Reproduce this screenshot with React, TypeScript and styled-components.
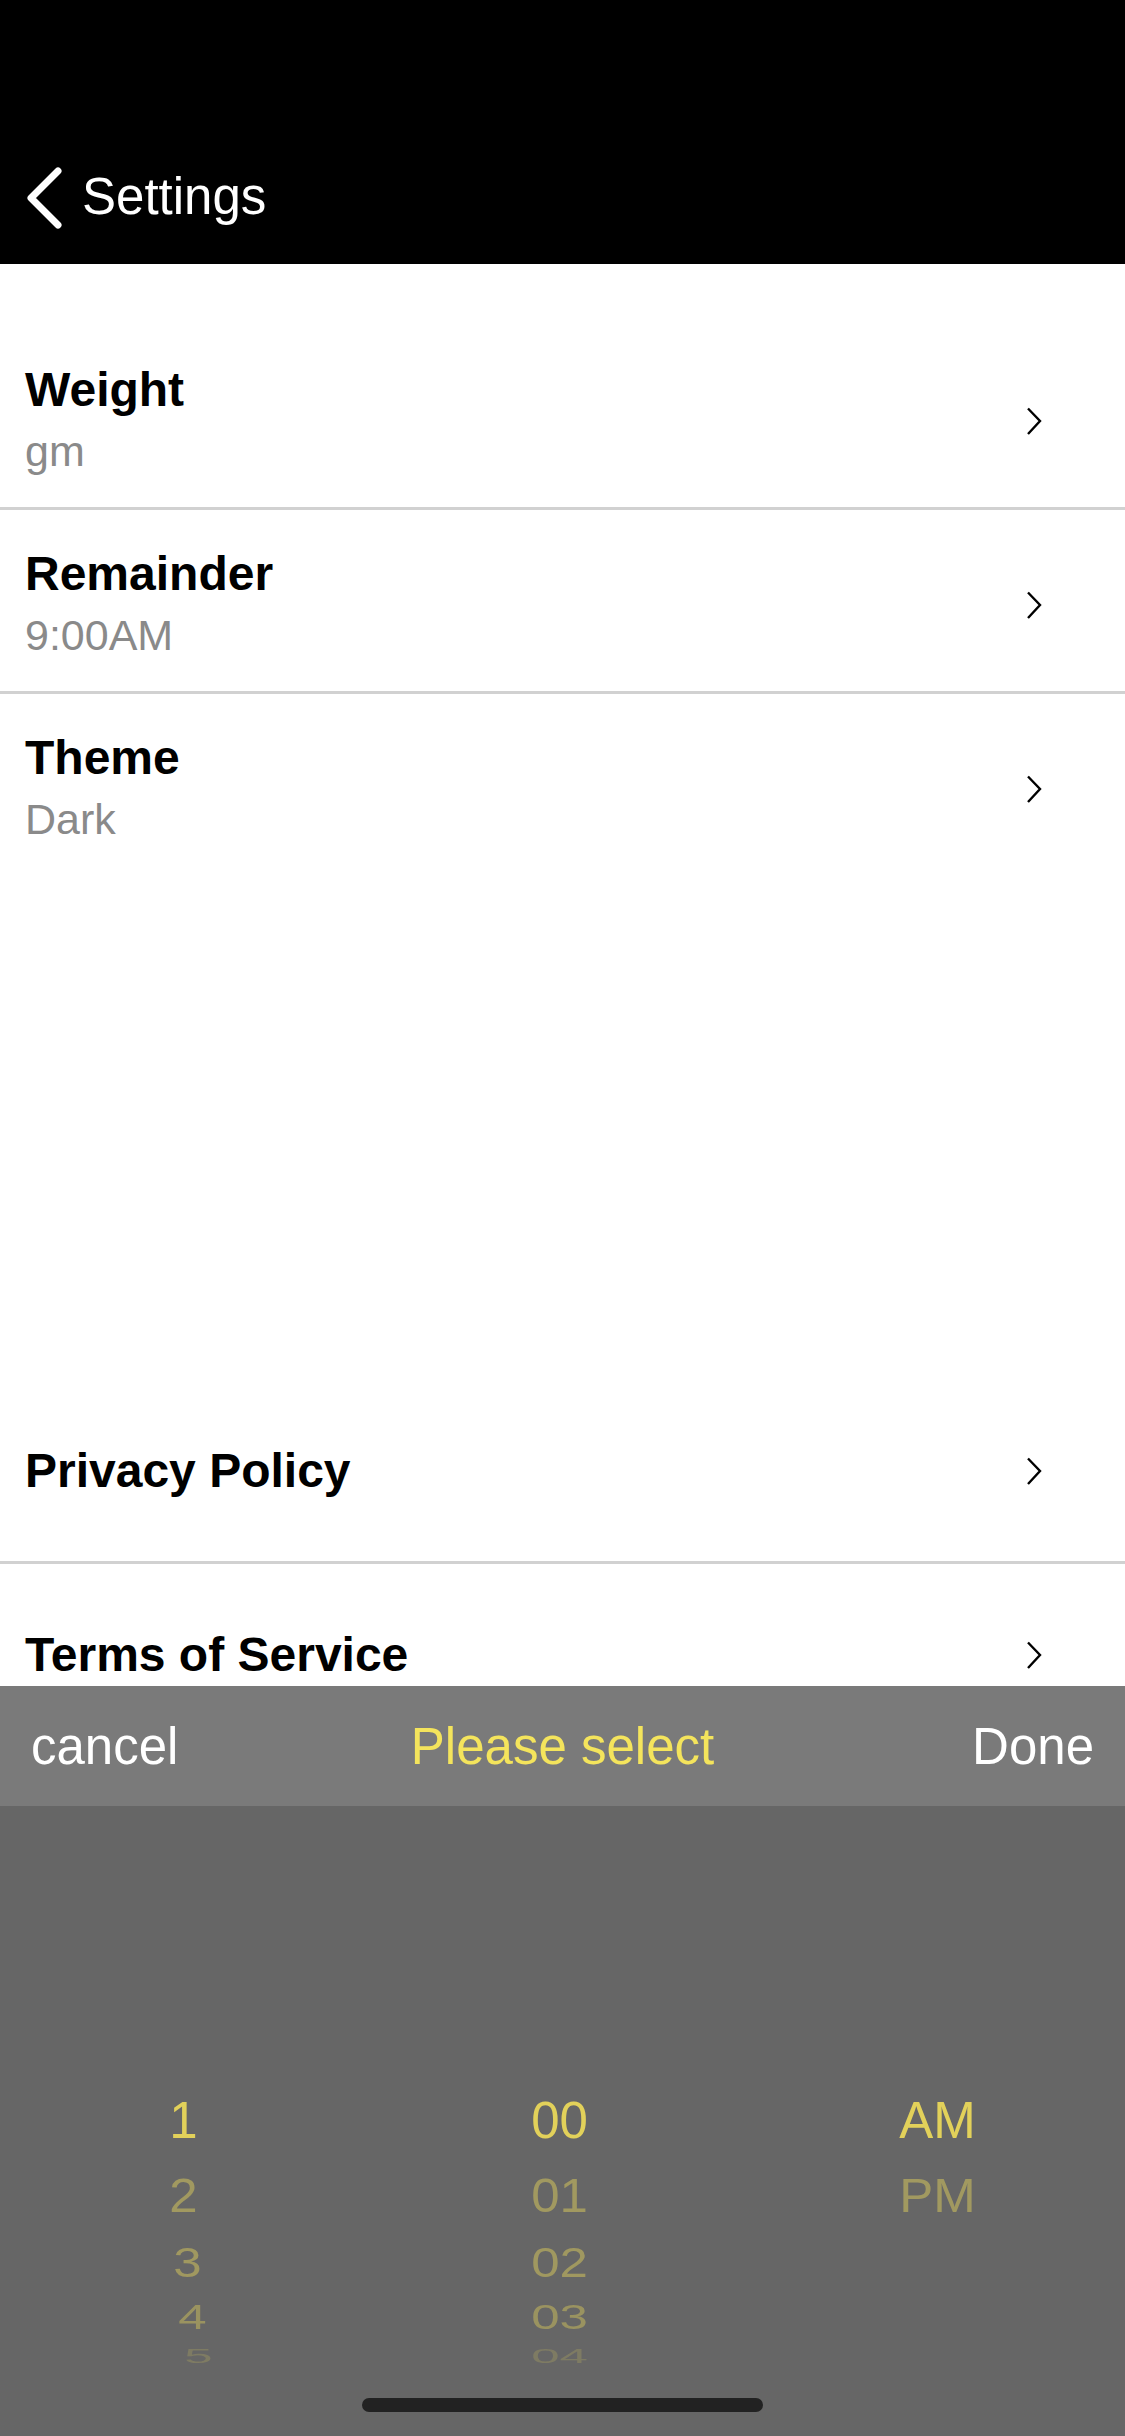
import React from 'react';
import styled, { createGlobalStyle } from 'styled-components';

const GlobalStyle = createGlobalStyle`
  html, body {
    margin: 0;
    padding: 0;
    background: #ffffff;
  }
  body {
    font-family: 'Liberation Sans', Arial, sans-serif;
    width: 1125px;
    min-height: 2436px;
    overflow: hidden;
  }
`;

const Page = styled.div`
  width: 1125px;
  min-height: 2436px;
  background: #ffffff;
`;

const Header = styled.header`
  background: #000000;
  height: 264px;
  display: flex;
  flex-direction: column;
  justify-content: flex-end;
`;

const NavBar = styled.div`
  height: 132px;
  display: flex;
  align-items: center;
  padding-left: 24px;
  gap: 18px;
`;

const NavTitle = styled.span`
  color: #ffffff;
  font-size: 51px;
  line-height: 60px;
  margin-top: -2px;
`;

const List = styled.div`
  padding-top: 62px;
`;

const Row = styled.div<{ $divider?: boolean; $single?: boolean }>`
  display: flex;
  align-items: center;
  justify-content: space-between;
  box-sizing: border-box;
  height: 184px;
  padding: ${p => (p.$single ? '0 83px 0 25px' : '34px 83px 25px 25px')};
  border-bottom: 3px solid ${p => (p.$divider ? '#d1d1d1' : 'transparent')};
`;

const RowText = styled.div`
  display: flex;
  flex-direction: column;
`;

const RowTitle = styled.span`
  font-size: 48px;
  font-weight: 700;
  line-height: 60px;
  color: #000000;
`;

const RowValue = styled.span`
  font-size: 43px;
  line-height: 62px;
  color: #8a8a8a;
`;

const Gap = styled.div`
  height: 502px;
`;

const Sheet = styled.div`
  position: fixed;
  left: 0;
  bottom: 0;
  width: 1125px;
  display: flex;
  flex-direction: column;
`;

const Toolbar = styled.div`
  height: 120px;
  background: #7a7a7a;
  display: grid;
  grid-template-columns: 1fr auto 1fr;
  align-items: center;
  padding: 0 31px;
  font-size: 51px;
`;

const ToolButton = styled.span<{ $end?: boolean }>`
  color: #ffffff;
  justify-self: ${p => (p.$end ? 'end' : 'start')};
`;

const ToolTitle = styled.span`
  color: #f4e45c;
`;

const Body = styled.div`
  height: 630px;
  background: #666666;
  display: flex;
  flex-direction: column;
`;

const Wheel = styled.div`
  flex: 1;
  display: grid;
  grid-template-columns: repeat(3, 1fr);
`;

const Column = styled.div`
  display: flex;
  flex-direction: column;
  padding-top: 277px;
`;

const Item = styled.div<{ $h: number; $sy: number; $op: number; $dx: number }>`
  height: ${p => p.$h}px;
  display: flex;
  align-items: center;
  justify-content: center;
  font-size: 51px;
  line-height: 1;
  color: #e2d15a;
  opacity: ${p => p.$op};
  transform: translateX(${p => p.$dx}px) scaleY(${p => p.$sy});
`;

const IndicatorRow = styled.div`
  height: 71px;
  display: flex;
  align-items: flex-end;
  justify-content: center;
  padding-bottom: 24px;
  box-sizing: border-box;
`;

const HomeIndicator = styled.div`
  width: 401px;
  height: 14px;
  border-radius: 7px;
  background: #222222;
`;

const BackIcon = () => (
  <svg width="40" height="66" viewBox="0 0 40 66">
    <path d="M34 6 L7 33 L34 60" fill="none" stroke="#ffffff" strokeWidth="7" strokeLinecap="round" strokeLinejoin="round" />
  </svg>
);

const Chevron = () => (
  <svg width="16" height="30" viewBox="0 0 16 30">
    <path d="M2 2.5 L14 15 L2 28" fill="none" stroke="#000000" strokeWidth="2.4" />
  </svg>
);

// depth on the wheel: slot height, vertical squash, fade, drift toward centre
const SLOTS = [
  { h: 75, sy: 1, op: 1, dx: 0 },
  { h: 75, sy: 0.95, op: 0.48, dx: 0 },
  { h: 59, sy: 0.84, op: 0.47, dx: 4 },
  { h: 51, sy: 0.68, op: 0.42, dx: 9 },
  { h: 25, sy: 0.41, op: 0.2, dx: 15 },
];

const columns = [
  { values: ['1', '2', '3', '4', '5'], dir: 1, base: -4 },
  { values: ['00', '01', '02', '03', '04'], dir: 0, base: -3 },
  { values: ['AM', 'PM'], dir: -1, base: 0 },
];

const settings = [
  { title: 'Weight', value: 'gm', divider: true },
  { title: 'Remainder', value: '9:00AM', divider: true },
  { title: 'Theme', value: 'Dark', divider: false },
];

const App = () => (
  <Page>
    <GlobalStyle />
    <Header>
      <NavBar>
        <BackIcon />
        <NavTitle>Settings</NavTitle>
      </NavBar>
    </Header>
    <List>
      {settings.map(s => (
        <Row key={s.title} $divider={s.divider}>
          <RowText>
            <RowTitle>{s.title}</RowTitle>
            <RowValue>{s.value}</RowValue>
          </RowText>
          <Chevron />
        </Row>
      ))}
      <Gap />
      <Row $single $divider>
        <RowTitle>Privacy Policy</RowTitle>
        <Chevron />
      </Row>
      <Row $single>
        <RowTitle>Terms of Service</RowTitle>
        <Chevron />
      </Row>
    </List>
    <Sheet>
      <Toolbar>
        <ToolButton>cancel</ToolButton>
        <ToolTitle>Please select</ToolTitle>
        <ToolButton $end>Done</ToolButton>
      </Toolbar>
      <Body>
        <Wheel>
          {columns.map((c, ci) => (
            <Column key={ci}>
              {c.values.map((v, i) => {
                const s = SLOTS[i];
                return (
                  <Item key={v} $h={s.h} $sy={s.sy} $op={s.op} $dx={c.base + s.dx * c.dir}>
                    {v}
                  </Item>
                );
              })}
            </Column>
          ))}
        </Wheel>
        <IndicatorRow>
          <HomeIndicator />
        </IndicatorRow>
      </Body>
    </Sheet>
  </Page>
);

export default App;
